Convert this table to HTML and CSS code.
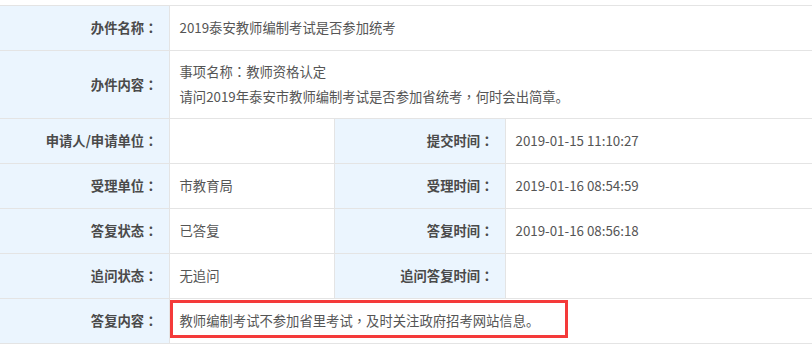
FILE: index.html
```html
<!DOCTYPE html>
<html lang="zh-CN">
<head>
<meta charset="utf-8">
<title>办件详情</title>
<link rel="stylesheet" href="styles.css">
</head>
<body>
<div class="detail">
  <table class="info">
    <colgroup>
      <col class="c-label">
      <col class="c-value">
      <col class="c-label2">
      <col>
    </colgroup>
    <tr>
      <th>办件名称<span class="p" lang="zh-TW">：</span></th>
      <td colspan="3">2019泰安教师编制考试是否参加统考</td>
    </tr>
    <tr>
      <th>办件内容<span class="p" lang="zh-TW">：</span></th>
      <td colspan="3" class="multi">事项名称<span class="p" lang="zh-TW">：</span>教师资格认定<br>请问2019年泰安市教师编制考试是否参加省统考<span class="p" lang="zh-TW">，</span>何时会出简章。</td>
    </tr>
    <tr>
      <th>申请人/申请单位<span class="p" lang="zh-TW">：</span></th>
      <td></td>
      <th>提交时间<span class="p" lang="zh-TW">：</span></th>
      <td>2019-01-15 11:10:27</td>
    </tr>
    <tr>
      <th>受理单位<span class="p" lang="zh-TW">：</span></th>
      <td>市教育局</td>
      <th>受理时间<span class="p" lang="zh-TW">：</span></th>
      <td>2019-01-16 08:54:59</td>
    </tr>
    <tr>
      <th>答复状态<span class="p" lang="zh-TW">：</span></th>
      <td>已答复</td>
      <th>答复时间<span class="p" lang="zh-TW">：</span></th>
      <td>2019-01-16 08:56:18</td>
    </tr>
    <tr>
      <th>追问状态<span class="p" lang="zh-TW">：</span></th>
      <td>无追问</td>
      <th>追问答复时间<span class="p" lang="zh-TW">：</span></th>
      <td></td>
    </tr>
    <tr>
      <th>答复内容<span class="p" lang="zh-TW">：</span></th>
      <td colspan="3" class="answer">教师编制考试不参加省里考试<span class="p" lang="zh-TW">，</span>及时关注政府招考网站信息。<span class="mark"></span></td>
    </tr>
  </table>
</div>
</body>
</html>
```
FILE: styles.css
```css
html, body {
  margin: 0;
  padding: 0;
  background: #fff;
}

.detail {
  padding-top: 5px;
  width: 812px;
}

.info {
  width: 812px;
  border-collapse: collapse;
  font-family: "Noto Sans CJK SC", "Microsoft YaHei", sans-serif;
  font-size: 13.33px;
  color: #555;
}

/* full-width colon and comma drawn centred in their em box */
.p {
  font-family: "Noto Sans CJK TC", "Noto Sans CJK SC", sans-serif;
}

.c-label { width: 169px; }
.c-value { width: 165px; }
.c-label2 { width: 171px; }

.info th,
.info td {
  border: 1px solid #e4e4e4;
  height: 44px;
  padding: 0 10px;
  line-height: 20px;
  vertical-align: middle;
}

.info tr > :first-child { border-left: none; }
.info tr > :last-child { border-right: none; }

.info th {
  background: #ebf5fe;
  text-align: right;
  font-weight: bold;
  color: #4a4a4a;
  padding-right: 11px;
  white-space: nowrap;
}

.info td {
  text-align: left;
}

.info td.multi {
  height: 50px;
  line-height: 25px;
  padding-top: 8px;
  padding-bottom: 9px;
}

.info td.answer {
  position: relative;
}

/* red highlight frame around the reply text */
.mark {
  position: absolute;
  left: 0;
  top: 1px;
  width: 398px;
  height: 38px;
  border: 3px solid #f43a3a;
  box-sizing: border-box;
  pointer-events: none;
}
```
